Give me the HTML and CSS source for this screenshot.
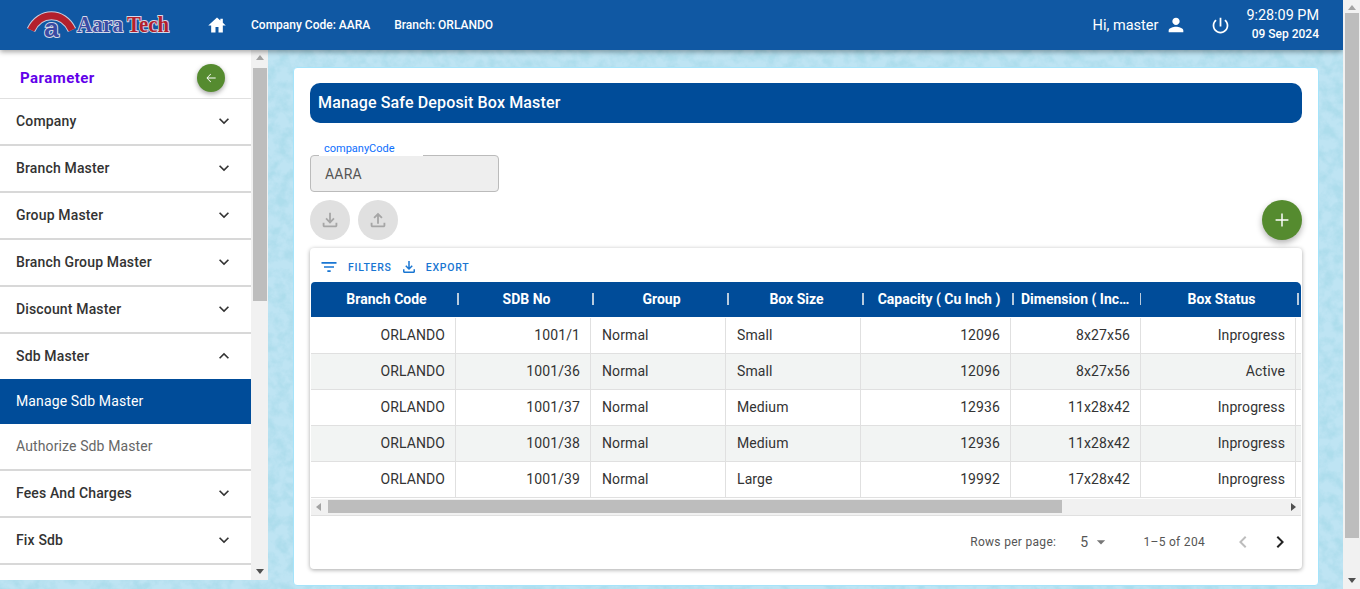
FILE: index.html
```html
<!DOCTYPE html>
<html>
  <head>
    <title>Manage Safe Deposit Box Master</title>
    <link rel="stylesheet" href="styles.css">
  </head>
  <body>
    <svg class="sprite" width="0" height="0">
      <symbol id="i-home" viewBox="0 0 24 24"><path d="M12 3 1.500 12.500H5V21h5.200v-6.500h3.600V21H19v-8.500h3.500L19 9.300V4.500h-3v2.100z"/></symbol>
      <symbol id="i-person" viewBox="0 0 24 24"><path d="M12 12c2.210 0 4-1.790 4-4s-1.790-4-4-4-4 1.790-4 4 1.790 4 4 4zm0 2c-2.670 0-8 1.340-8 4v2h16v-2c0-2.660-5.330-4-8-4z"/></symbol>
      <symbol id="i-power" viewBox="0 0 24 24"><path d="M13 3h-2v10h2V3zm4.830 2.170l-1.420 1.420C17.990 7.860 19 9.810 19 12c0 3.870-3.130 7-7 7s-7-3.130-7-7c0-2.190 1.010-4.140 2.580-5.420L6.170 5.170C4.230 6.820 3 9.260 3 12c0 4.970 4.030 9 9 9s9-4.030 9-9c0-2.740-1.230-5.180-3.170-6.830z"/></symbol>
      <symbol id="i-back" viewBox="0 0 24 24"><path d="M20 11.300H6.600l5.600-5.600-1-1L4.300 12l6.900 7.300 1-1-5.600-5.600H20z"/></symbol>
      <symbol id="i-more" viewBox="0 0 24 24"><path d="M16.590 8.590L12 13.170 7.410 8.590 6 10l6 6 6-6z"/></symbol>
      <symbol id="i-less" viewBox="0 0 24 24"><path d="M12 8l-6 6 1.410 1.410L12 10.830l4.590 4.580L18 14z"/></symbol>
      <symbol id="i-add" viewBox="0 0 24 24"><path d="M19 12.800h-6.200V19h-1.600v-6.200H5v-1.600h6.200V5h1.600v6.200H19z"/></symbol>
      <symbol id="i-filter" viewBox="0 0 24 24"><path d="M10 18h4v-2h-4v2zM3 6v2h18V6H3zm3 7h12v-2H6v2z"/></symbol>
      <symbol id="i-download" viewBox="0 0 24 24"><path d="M18 15v3H6v-3H4v3c0 1.100.9 2 2 2h12c1.100 0 2-.9 2-2v-3h-2zm-1-4l-1.410-1.410L13 12.170V4h-2v8.170L8.410 9.590 7 11l5 5 5-5z"/></symbol>
      <symbol id="i-upload" viewBox="0 0 24 24"><path d="M18 15v3H6v-3H4v3c0 1.100.9 2 2 2h12c1.100 0 2-.9 2-2v-3h-2zM7 9l1.410 1.410L11 7.830V16h2V7.830l2.590 2.580L17 9l-5-5-5 5z"/></symbol>
      <symbol id="i-prev" viewBox="0 0 24 24"><path d="M15.410 7.410L14 6l-6 6 6 6 1.410-1.410L10.830 12z"/></symbol>
      <symbol id="i-next" viewBox="0 0 24 24"><path d="M10 6L8.590 7.410 13.170 12l-4.580 4.590L10 18l6-6z"/></symbol>
      <symbol id="i-drop" viewBox="0 0 24 24"><path d="M7 10l5 5 5-5z"/></symbol>
    </svg>

    <div class="app">
      <div class="page">
        <header class="topbar">
          <svg class="logo" width="160" height="40" viewBox="0 -5 160 40">
            <path class="logo-arc-edge" d="M5 20C14 1 37 1 46 20"/>
            <path class="logo-arc" d="M5 20C14 1 37 1 46 20"/>
            <text class="logo-a" x="25.500" y="26.500">a</text>
            <text class="logo-aara" x="51" y="22" textLength="46" lengthAdjust="spacingAndGlyphs">Aara</text>
            <text class="logo-tech" x="101" y="22" textLength="42" lengthAdjust="spacingAndGlyphs">Tech</text>
          </svg>
          <svg class="icon home-icon"><use href="#i-home"/></svg>
          <span class="company">Company Code: AARA</span>
          <span class="branch">Branch: ORLANDO</span>
          <div class="topbar-right">
            <span class="hello">Hi, master</span>
            <svg class="icon user-icon"><use href="#i-person"/></svg>
            <svg class="icon power-icon"><use href="#i-power"/></svg>
            <div class="clock">
              <div class="time">9:28:09 PM</div>
              <div class="date">09 Sep 2024</div>
            </div>
          </div>
        </header>

        <div class="content">
          <svg class="texture" width="100%" height="100%">
            <filter id="paper" x="0" y="0" width="100%" height="100%">
              <feTurbulence type="fractalNoise" baseFrequency="0.09" numOctaves="4" seed="7"/>
              <feColorMatrix type="matrix" values="0 0 0 0 0.42  0 0 0 0 0.72  0 0 0 0 0.84  2.600 0 0 0 -0.950"/>
            </filter>
            <rect width="100%" height="100%" fill="#bee4f3"/>
            <rect width="100%" height="100%" filter="url(#paper)"/>
          </svg>

          <aside class="sidebar">
            <div class="side-list">
              <div class="side-head">
                <span class="side-title">Parameter</span>
                <span class="back-btn"><svg class="icon"><use href="#i-back"/></svg></span>
              </div>
              <div class="side-item">Company<svg class="icon"><use href="#i-more"/></svg></div>
              <div class="side-item">Branch Master<svg class="icon"><use href="#i-more"/></svg></div>
              <div class="side-item">Group Master<svg class="icon"><use href="#i-more"/></svg></div>
              <div class="side-item">Branch Group Master<svg class="icon"><use href="#i-more"/></svg></div>
              <div class="side-item">Discount Master<svg class="icon"><use href="#i-more"/></svg></div>
              <div class="side-item open">Sdb Master<svg class="icon"><use href="#i-less"/></svg></div>
              <div class="side-sub active">Manage Sdb Master</div>
              <div class="side-sub last">Authorize Sdb Master</div>
              <div class="side-item">Fees And Charges<svg class="icon"><use href="#i-more"/></svg></div>
              <div class="side-item">Fix Sdb<svg class="icon"><use href="#i-more"/></svg></div>
            </div>
            <div class="vscroll">
              <span class="arrow up"></span>
              <div class="vthumb side-thumb"></div>
              <span class="arrow down"></span>
            </div>
          </aside>

          <main class="card">
            <h1 class="title">Manage Safe Deposit Box Master</h1>

            <div class="field">
              <span class="field-label">companyCode</span>
              <div class="field-input">AARA</div>
            </div>

            <div class="actions">
              <span class="round-btn"><svg class="icon"><use href="#i-download"/></svg></span>
              <span class="round-btn"><svg class="icon"><use href="#i-upload"/></svg></span>
              <span class="add-btn"><svg class="icon"><use href="#i-add"/></svg></span>
            </div>

            <section class="grid-card">
              <div class="grid-tools">
                <svg class="icon filter-icon"><use href="#i-filter"/></svg>
                <span class="tool-text">FILTERS</span>
                <svg class="icon export-icon"><use href="#i-download"/></svg>
                <span class="tool-text">EXPORT</span>
              </div>

              <div class="grid-wrap">
                <table class="grid">
                  <colgroup>
                    <col class="c-branch"><col class="c-sdb"><col class="c-group"><col class="c-size">
                    <col class="c-cap"><col class="c-dim"><col class="c-status"><col class="c-rest">
                  </colgroup>
                  <thead>
                    <tr>
                      <th>Branch Code</th>
                      <th>SDB No</th>
                      <th>Group</th>
                      <th>Box Size</th>
                      <th>Capacity ( Cu Inch )</th>
                      <th>Dimension ( Inch )</th>
                      <th>Box Status</th>
                      <th></th>
                    </tr>
                  </thead>
                  <tbody>
                    <tr><td class="num">ORLANDO</td><td class="num">1001/1</td><td>Normal</td><td>Small</td><td class="num">12096</td><td class="num">8x27x56</td><td class="num">Inprogress</td><td></td></tr>
                    <tr><td class="num">ORLANDO</td><td class="num">1001/36</td><td>Normal</td><td>Small</td><td class="num">12096</td><td class="num">8x27x56</td><td class="num">Active</td><td></td></tr>
                    <tr><td class="num">ORLANDO</td><td class="num">1001/37</td><td>Normal</td><td>Medium</td><td class="num">12936</td><td class="num">11x28x42</td><td class="num">Inprogress</td><td></td></tr>
                    <tr><td class="num">ORLANDO</td><td class="num">1001/38</td><td>Normal</td><td>Medium</td><td class="num">12936</td><td class="num">11x28x42</td><td class="num">Inprogress</td><td></td></tr>
                    <tr><td class="num">ORLANDO</td><td class="num">1001/39</td><td>Normal</td><td>Large</td><td class="num">19992</td><td class="num">17x28x42</td><td class="num">Inprogress</td><td></td></tr>
                  </tbody>
                </table>
              </div>

              <div class="hscroll">
                <span class="arrow left"></span>
                <div class="hthumb"></div>
                <span class="arrow right"></span>
              </div>

              <div class="pager">
                <span class="pager-label">Rows per page:</span>
                <span class="pager-size">5</span>
                <svg class="icon drop-icon"><use href="#i-drop"/></svg>
                <span class="pager-count">1–5 of 204</span>
                <svg class="icon prev-icon"><use href="#i-prev"/></svg>
                <svg class="icon next-icon"><use href="#i-next"/></svg>
              </div>
            </section>
          </main>
        </div>
      </div>

      <div class="vscroll page-scroll">
        <span class="arrow up"></span>
        <div class="vthumb page-thumb"></div>
        <span class="arrow down"></span>
      </div>
    </div>
  </body>
</html>
```

FILE: styles.css
```css
* {
  box-sizing: border-box;
}

html,
body {
  height: 100%;
  margin: 0;
  overflow: hidden;
}

body {
  font-family: Roboto, "Liberation Sans", sans-serif;
  font-size: 14px;
  color: #333;
}

.sprite {
  position: absolute;
}

.icon {
  display: block;
  width: 24px;
  height: 24px;
  fill: currentColor;
  flex: none;
}

.app {
  display: flex;
  height: 589px;
}

.page {
  flex: 1;
  display: flex;
  flex-direction: column;
  min-width: 0;
}

/* top bar */
.topbar {
  position: relative;
  z-index: 3;
  display: flex;
  align-items: center;
  flex: none;
  height: 50px;
  padding-left: 26px;
  background-color: #1058a3;
  color: #fff;
  box-shadow: 0 2px 5px rgba(0, 0, 0, 0.35);
}

.logo {
  flex: none;
  margin-right: -14px;
}

.logo-arc {
  fill: none;
  stroke: #b3202c;
  stroke-width: 7;
}

.logo-arc-edge {
  fill: none;
  stroke: #c7cde0;
  stroke-width: 9;
}

.logo-a,
.logo-aara,
.logo-tech {
  font-family: "Liberation Serif", serif;
  font-weight: bold;
  paint-order: stroke;
  stroke: #d5d9e8;
  stroke-width: 2px;
}

.logo-a {
  font-family: "Liberation Sans", sans-serif;
  font-size: 26px;
  text-anchor: middle;
  fill: #3b4ba3;
}

.logo-aara {
  font-size: 24px;
  fill: #3b4ba3;
}

.logo-tech {
  font-size: 24px;
  fill: #b3202c;
}

.home-icon {
  width: 20px;
  height: 20px;
  margin-left: 35px;
}

.company,
.branch {
  font-size: 12px;
  font-weight: 500;
}

.company {
  margin-left: 24px;
}

.branch {
  margin-left: 24px;
}

.topbar-right {
  display: flex;
  align-items: center;
  margin-left: auto;
  padding-right: 24px;
}

.hello {
  font-size: 14.5px;
}

.user-icon {
  width: 22px;
  height: 22px;
  margin-left: 7px;
}

.power-icon {
  width: 21px;
  height: 21px;
  margin-left: 23px;
}

.clock {
  margin-left: 15px;
  text-align: right;
}

.time {
  font-size: 14.4px;
  line-height: 18px;
}

.date {
  font-size: 12px;
  font-weight: 500;
  line-height: 18px;
}

/* body area */
.content {
  position: relative;
  flex: 1;
  display: flex;
  align-items: flex-start;
  min-height: 0;
}

.texture {
  position: absolute;
  top: 0;
  left: 0;
}

/* left menu */
.sidebar {
  position: relative;
  z-index: 2;
  display: flex;
  flex: none;
  width: 268px;
  height: 530px;
  background-color: #fff;
}

.side-list {
  flex: 1;
  overflow: hidden;
}

.side-head {
  display: flex;
  align-items: center;
  justify-content: space-between;
  height: 49px;
  padding: 8px 26px 0 20px;
  border-bottom: 1px solid #e0e0e0;
}

.side-title {
  font-size: 15px;
  font-weight: 700;
  letter-spacing: 0.45px;
  color: #6200ea;
}

.back-btn {
  display: flex;
  align-items: center;
  justify-content: center;
  width: 28px;
  height: 28px;
  border-radius: 50%;
  background-color: #558b2f;
  color: #fff;
  box-shadow: 0 2px 5px rgba(0, 0, 0, 0.35);
}

.back-btn .icon {
  width: 14px;
  height: 14px;
}

.side-item {
  display: flex;
  align-items: center;
  justify-content: space-between;
  height: 47px;
  padding: 0 17px 2px 16px;
  border-bottom: 2px solid #d8d8d8;
  font-weight: 500;
  letter-spacing: 0.15px;
  color: #333;
}

.side-item .icon {
  width: 20px;
  height: 20px;
}

.side-item.open {
  height: 45px;
  padding-bottom: 2px;
  border-bottom: 0;
}

.side-sub {
  display: flex;
  align-items: center;
  height: 45px;
  padding: 0 0 2px 16px;
  letter-spacing: 0.12px;
  color: #666;
}

.side-sub.active {
  background-color: #004c99;
  color: #fff;
}

.side-sub.last {
  height: 47px;
  padding-bottom: 2px;
  border-bottom: 2px solid #d8d8d8;
}

/* scrollbars */
.vscroll {
  display: flex;
  flex-direction: column;
  align-items: center;
  flex: none;
  width: 17px;
  background-color: #f1f1f1;
}

.page-scroll {
  position: relative;
  z-index: 4;
}

.arrow {
  flex: none;
  width: 0;
  height: 0;
  border: 4px solid transparent;
}

.arrow.up {
  margin-top: 5px;
  border-top: 0;
  border-bottom: 5px solid #a3a3a3;
}

.arrow.down {
  margin-top: auto;
  margin-bottom: 6px;
  border-bottom: 0;
  border-top: 5px solid #505050;
}

.arrow.left {
  margin-left: 5px;
  border-left: 0;
  border-right: 5px solid #a3a3a3;
}

.arrow.right {
  margin-left: auto;
  margin-right: 5px;
  border-right: 0;
  border-left: 5px solid #505050;
}

.vthumb {
  width: 14px;
  background-color: #bdbdbd;
}

.side-thumb {
  height: 233px;
  margin-top: 8px;
}

.page-thumb {
  height: 525px;
  margin-top: 3px;
}

/* main card */
.card {
  position: relative;
  z-index: 1;
  flex: none;
  width: 1026px;
  height: 519px;
  margin: 17px 0 0 25px;
  padding: 15px 16px 0;
  border: 1px solid #a5e4fb;
  border-radius: 4px;
  background-color: #fff;
}

.title {
  display: flex;
  align-items: center;
  height: 40px;
  margin: 0;
  padding: 0 0 2px 8px;
  border-radius: 10px;
  background-color: #004c99;
  color: #fff;
  font-size: 16px;
  font-weight: 500;
  letter-spacing: 0.14px;
}

.field {
  position: relative;
  width: 189px;
  margin-top: 32px;
}

.field-label {
  position: absolute;
  top: -13px;
  left: 9px;
  height: 14px;
  padding: 0 28px 0 5px;
  background-color: #fff;
  color: #0d6efd;
  font-size: 11px;
  line-height: 14px;
}

.field-input {
  display: flex;
  align-items: center;
  height: 37px;
  padding-left: 14px;
  border: 1px solid #bbb;
  border-radius: 4px;
  background-color: #eee;
  color: #555;
  font-size: 14px;
  letter-spacing: 0.2px;
}

.actions {
  display: flex;
  gap: 8px;
  margin-top: 8px;
}

.round-btn,
.add-btn {
  display: flex;
  align-items: center;
  justify-content: center;
  width: 40px;
  height: 40px;
  border-radius: 50%;
}

.round-btn {
  background-color: #e0e0e0;
  color: #a6a6a6;
}

.round-btn .icon {
  width: 22px;
  height: 22px;
}

.add-btn {
  margin-left: auto;
  background-color: #558b2f;
  color: #fff;
  box-shadow: 0 3px 6px rgba(0, 0, 0, 0.3);
}

.add-btn .icon {
  width: 22px;
  height: 22px;
}

/* data grid */
.grid-card {
  margin-top: 8px;
  height: 321px;
  border-radius: 4px;
  background-color: #fff;
  box-shadow: 0 1px 4px rgba(0, 0, 0, 0.35);
  overflow: hidden;
}

.grid-tools {
  display: flex;
  align-items: center;
  height: 34px;
  padding: 4px 0 0 9px;
  color: #1976d2;
}

.filter-icon {
  width: 20px;
  height: 20px;
}

.export-icon {
  width: 18px;
  height: 18px;
  margin-left: 8px;
}

.tool-text {
  margin-left: 9px;
  font-size: 10.5px;
  font-weight: 500;
  letter-spacing: 0.75px;
}

.export-icon + .tool-text {
  margin-left: 8px;
}

.grid-wrap {
  overflow: hidden;
  margin: 0 1px;
}

.grid {
  width: 990px;
  border-collapse: separate;
  border-spacing: 0;
  table-layout: fixed;
}

.c-branch {
  width: 145px;
}

.c-sdb,
.c-group,
.c-size {
  width: 135px;
}

.c-cap {
  width: 150px;
}

.c-dim {
  width: 130px;
}

.c-status {
  width: 155px;
}

.c-rest {
  width: 5px;
}

.grid th {
  position: relative;
  height: 36px;
  padding: 0 4px 2px 10px;
  background: linear-gradient(#004c99 35px, #fff 35px);
  color: #fff;
  font-size: 14px;
  font-weight: 700;
  text-align: center;
  white-space: nowrap;
  overflow: hidden;
  text-overflow: ellipsis;
}

.grid th:first-child {
  border-top-left-radius: 4px;
}

.grid th:last-child {
  border-top-right-radius: 6px;
}

.grid th:not(:last-child) {
  overflow: visible;
}

.grid th:not(:last-child)::after {
  content: "";
  position: absolute;
  top: 11px;
  right: -3px;
  width: 2px;
  height: 12px;
  background-color: #b9cbdd;
  z-index: 1;
}

.grid th:nth-child(6) {
  padding: 0 9px 2px 10px;
  overflow: hidden;
}

.grid th:nth-child(6)::after {
  right: -1px;
}

.grid td {
  height: 36px;
  padding: 0 10px 2px 11px;
  border-right: 1px solid #e0e0e0;
  border-bottom: 1px solid #e0e0e0;
  color: #333;
  font-size: 14px;
  letter-spacing: 0.1px;
  white-space: nowrap;
}

.grid td.num {
  text-align: right;
}

.grid td:last-child {
  border-right: 0;
  padding: 0;
}

.grid tbody tr:nth-child(even) td {
  background-color: #f2f4f3;
}

.hscroll {
  display: flex;
  align-items: center;
  height: 17px;
  margin: 1px 1px 0;
  border-bottom: 1px solid #e0e0e0;
  background-color: #f1f1f1;
}

.hthumb {
  width: 734px;
  height: 13px;
  margin: -2px 0 0 7px;
  background-color: #bdbdbd;
}

.pager {
  display: flex;
  align-items: center;
  height: 53px;
  padding: 0 10px 2px 0;
  justify-content: flex-end;
  font-size: 12px;
  letter-spacing: 0.3px;
  color: #555;
}

.pager-size {
  margin-left: 24px;
  font-size: 14px;
}

.drop-icon {
  margin-left: 3px;
  width: 20px;
  height: 20px;
  color: #777;
}

.pager-count {
  margin-left: 32px;
}

.prev-icon {
  margin-left: 26px;
  color: #bdbdbd;
}

.next-icon {
  margin-left: 13px;
  color: #222;
}
```
